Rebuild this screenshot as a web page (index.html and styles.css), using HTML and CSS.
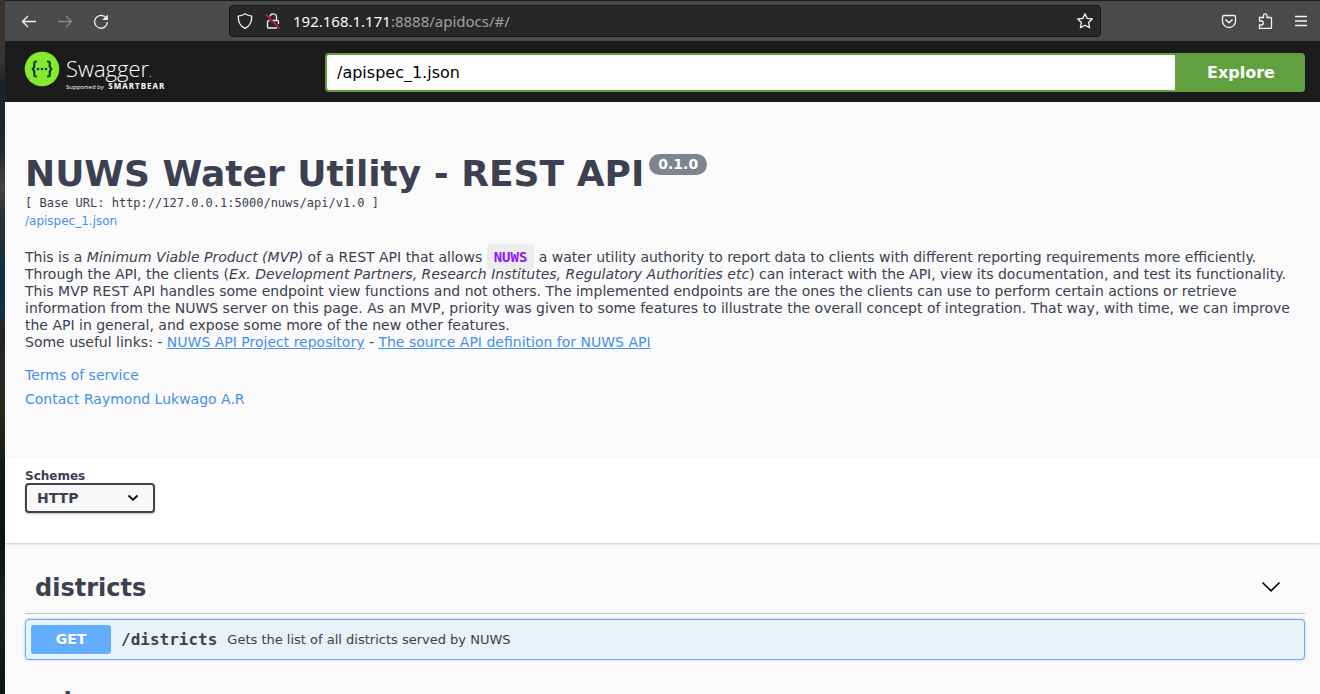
FILE: index.html
```html
<!DOCTYPE html>
<html lang="en">
<head>
<meta charset="utf-8">
<title>NUWS Water Utility - REST API</title>
<link rel="stylesheet" href="styles.css">
</head>
<body>
<div class="desktop">
  <div class="window">
    <div class="toolbar">
      <div class="nav">
        <button class="icon-button" aria-label="Back"><svg width="16" height="16" viewBox="0 0 16 16"><path d="M15 8.500H2M7 3L1.500 8.500L7 14"/></svg></button>
        <button class="icon-button icon-button-dim" aria-label="Forward"><svg width="16" height="16" viewBox="0 0 16 16"><path d="M1 8.500H14M9 3L14.500 8.500L9 14"/></svg></button>
        <button class="icon-button" aria-label="Reload"><svg width="16" height="16" viewBox="0 0 16 16"><path d="M13.500 5.500A6.400 6.400 0 1 0 14.400 9"/><path class="solid" d="M14.800 1.500V7H9.300Z"/></svg></button>
      </div>
      <div class="address">
        <svg class="chrome-icon" width="16" height="16" viewBox="0 0 16 16"><path d="M8 .8C10 2.200 12.500 2.900 14.700 3.200C14.900 8.500 13 13.200 8 15.300C3 13.200 1.100 8.500 1.300 3.200C3.500 2.900 6 2.200 8 .8Z"/></svg>
        <svg class="chrome-icon" width="16" height="16" viewBox="0 0 16 16"><path d="M5 3.500C5.500 -.2 11.500 -.2 11.500 4.500V7.500M7.500 7.500H12.200Q13.500 7.500 13.500 8.800V11M12 15H3.800Q2.500 15 2.500 13.700V8.800Q2.500 7.500 4.500 7.500"/><path class="slash" d="M1 1.500L14.800 15.500"/></svg>
        <span class="url"><span class="url-host">192.168.1.171</span>:8888/apidocs/#/</span>
        <button class="icon-button" aria-label="Bookmark"><svg width="16" height="16" viewBox="0 0 16 16"><path stroke-linejoin="round" d="M8 .8L10.200 5.400L15.300 6L11.600 9.500L12.600 14.800L8 12.200L3.400 14.800L4.400 9.500L.7 6L5.800 5.400Z"/></svg></button>
      </div>
      <div class="actions">
        <button class="icon-button" aria-label="Save to Pocket"><svg width="16" height="16" viewBox="0 0 16 16"><path d="M3 2.500H13Q14.500 2.500 14.500 4V8A6.500 6.500 0 0 1 1.500 8V4Q1.500 2.500 3 2.500Z"/><path stroke-width="1.500" d="M4.500 6.500L8 9.700L11.500 6.500"/></svg></button>
        <button class="icon-button" aria-label="Extensions"><svg width="16" height="16" viewBox="0 0 16 16"><path d="M2.500 15.400V12H4.300C6.900 12 6.900 8 4.300 8H2.500V4.500H6.500V2.500C6.500 .2 10 .2 10 2.500V4.500H13.500Q14.500 4.500 14.500 5.500V14.400Q14.500 15.400 13.500 15.400Z"/></svg></button>
        <button class="icon-button" aria-label="Menu"><svg width="16" height="16" viewBox="0 0 16 16"><path d="M2 3.500H14M2 8H14M2 12.500H14"/></svg></button>
      </div>
    </div>

    <header class="topbar">
      <a class="logo" href="#">
        <svg width="36" height="36" viewBox="0 0 36 36"><circle cx="18" cy="18" r="17.300" fill="#85ea2d"/><g fill="none" stroke="#173647" stroke-width="2.200"><path d="M13 10.500C9.500 10.300 10.300 12 10.300 14.500C10.300 17 9.800 17.600 8 18C9.800 18.400 10.300 19 10.300 21.500C10.300 24 9.500 25.700 13 25.500"/><path d="M23 10.500C26.500 10.300 25.700 12 25.700 14.500C25.700 17 26.200 17.600 28 18C26.200 18.400 25.700 19 25.700 21.500C25.700 24 26.500 25.700 23 25.500"/></g><g fill="#173647"><circle cx="14" cy="18" r="1.300"/><circle cx="18" cy="18" r="1.300"/><circle cx="22" cy="18" r="1.300"/></g></svg>
        <span class="logo-text"><span class="logo-name">Swagger<small>.</small></span><span class="logo-by">Supported by <b>SMARTBEAR</b></span></span>
      </a>
      <form class="explore">
        <input class="explore-input" type="text" value="/apispec_1.json" aria-label="API definition">
        <button class="explore-button" type="button">Explore</button>
      </form>
    </header>

    <main>
      <section class="info">
        <h1 class="title">NUWS Water Utility - REST API<span class="version">0.1.0</span></h1>
        <div class="base-url">[ Base URL: http://127.0.0.1:5000/nuws/api/v1.0 ]</div>
        <a class="spec-link" href="#">/apispec_1.json</a>
        <p class="description">This is a <em>Minimum Viable Product (MVP)</em> of a REST API that allows <code>NUWS</code> a water utility authority to report data to clients with different reporting requirements more efficiently. Through the API, the clients (<em>Ex. Development Partners, Research Institutes, Regulatory Authorities etc</em>) can interact with the API, view its documentation, and test its functionality. This MVP REST API handles some endpoint view functions and not others. The implemented endpoints are the ones the clients can use to perform certain actions or retrieve information from the NUWS server on this page. As an MVP, priority was given to some features to illustrate the overall concept of integration. That way, with time, we can improve the API in general, and expose some more of the new other features.<br>Some useful links: - <a href="#">NUWS API Project repository</a> - <a href="#">The source API definition for NUWS API</a></p>
        <a class="meta-link" href="#">Terms of service</a>
        <a class="meta-link" href="#">Contact Raymond Lukwago A.R</a>
      </section>

      <section class="schemes">
        <label class="schemes-label" for="scheme">Schemes</label>
        <div class="select">
          <select id="scheme"><option>HTTP</option></select>
          <svg class="select-arrow" width="12" height="8" viewBox="0 0 12 8"><path d="M1.500 1.500L6 5.800L10.500 1.500"/></svg>
        </div>
      </section>

      <section class="tag">
        <h2 class="tag-title">districts<button class="tag-toggle" aria-label="Collapse districts"><svg width="20" height="14" viewBox="0 0 20 14"><path d="M1.500 1.500L10 9.800L18.500 1.500"/></svg></button></h2>
        <a class="operation" href="#"><span class="method">GET</span><span class="path">/districts</span><span class="summary">Gets the list of all districts served by NUWS</span></a>
      </section>
      <section class="tag">
        <h2 class="tag-title">schemes</h2>
      </section>
    </main>
  </div>
</div>
</body>
</html>
```
FILE: styles.css
```css
* { box-sizing: border-box; }
body {
  margin: 0;
  font-family: "DejaVu Sans", sans-serif;
  color: #3b4151;
}
button { font: inherit; border: 0; margin: 0; cursor: pointer; }
a { color: #4990e2; }

.desktop {
  height: 100vh;
  overflow: hidden;
  padding-left: 5px;
  background: linear-gradient(#3a332d 0, #3a332d 60px, #142330 85px, #1c2935 150px, #47443b 185px, #26313b 220px, #0f2c45 290px, #10304a 310px, #25241f 330px, #232a22 390px, #252c12 410px, #101c16 470px, #0b1414 540px, #16241a 600px, #0c1611 100%);
}
.window { background: #fafafa; min-height: 100%; }

.toolbar {
  display: flex;
  align-items: center;
  height: 41px;
  padding: 0 11px 0 16px;
  border-top: 1px solid #1c1c1c;
  background: #4a4a4a;
}
.nav { display: flex; gap: 20px; width: 208px; }
.actions { display: flex; gap: 20px; margin-left: auto; }
.icon-button { display: flex; padding: 0; background: none; }
.icon-button svg, .chrome-icon {
  fill: none;
  stroke: #f4f4f4;
  stroke-width: 1.3;
}
.icon-button-dim svg { stroke: #888; }
.icon-button .solid { fill: #f4f4f4; stroke: none; }
.chrome-icon .slash { stroke: #e3134f; stroke-width: 1.5; }
.address {
  display: flex;
  align-items: center;
  gap: 12px;
  flex: 0 1 872px;
  height: 32px;
  padding: 0 7px;
  border: 1px solid #181818;
  border-radius: 4px;
  background: #272727;
}
.url {
  flex: 1;
  color: #a0a0a0;
  font: 15px/20px "Noto Sans", sans-serif;
}
.url-host { color: #fbfbfe; }

.topbar {
  display: flex;
  align-items: center;
  height: 61px;
  padding: 2px 15px 0 19px;
  background: #1b1b1b;
}
.logo {
  display: flex;
  gap: 6px;
  flex: 0 0 301px;
  height: 42px;
  margin-top: -2px;
  color: #fff;
  text-decoration: none;
}
.logo-text { display: flex; flex-direction: column; padding-top: 4px; font-family: "Open Sans", sans-serif; }
.logo-name { font-size: 22px; line-height: 26px; font-weight: 300; }
.logo-name small { font-size: 12px; line-height: 12px; }
.logo-by { font-size: 6px; line-height: 12px; white-space: nowrap; }
.logo-by b { margin-left: 3px; font-size: 8px; line-height: 8px; font-weight: 700; letter-spacing: 1px; }
.explore { display: flex; flex: 1; height: 39px; }
.explore-input {
  flex: 1;
  min-width: 0;
  padding: 0 10px;
  border: 2px solid #62a03f;
  border-right: 0;
  border-radius: 4px 0 0 4px;
  background: #fff;
  color: #000;
  font: 16px "DejaVu Sans", sans-serif;
}
.explore-button {
  width: 130px;
  padding: 0 0 0 2px;
  border-radius: 0 4px 4px 0;
  background: #62a03f;
  color: #fff;
  font-size: 16px;
  font-weight: 700;
}

.info { padding: 51px 20px 50px; }
.title { margin: 0; font-size: 36px; line-height: 42px; }
.version {
  display: inline-block;
  margin-left: 5px;
  padding: 2px 9px;
  border-radius: 11px;
  background: #7d8492;
  color: #fff;
  font-size: 14px;
  line-height: 17px;
  vertical-align: 17px;
}
.base-url { font: 12px/16px "DejaVu Sans Mono", monospace; }
.spec-link {
  display: block;
  font-size: 12px;
  line-height: 20px;
  text-decoration: none;
}
.description { margin: 18px 0 16px; font-size: 14px; line-height: 17px; }
.description code {
  padding: 5px 7px;
  border-radius: 4px;
  background: #ededed;
  color: #9012fe;
  font: 700 14px "DejaVu Sans Mono", monospace;
}
.meta-link {
  display: block;
  font-size: 14px;
  line-height: 17px;
  text-decoration: none;
}
.meta-link + .meta-link { margin-top: 7px; }

.schemes {
  padding: 11px 20px 30px;
  background: #fff;
  box-shadow: 0 1px 2px rgba(0, 0, 0, .2);
}
.schemes-label { display: block; font-size: 12px; line-height: 14px; font-weight: 700; }
.select { position: relative; width: 130px; }
.select select {
  display: block;
  appearance: none;
  width: 100%;
  height: 30px;
  padding: 0 10px;
  border: 2px solid #41444e;
  border-radius: 4px;
  background: #f7f7f7;
  box-shadow: 0 1px 2px rgba(0, 0, 0, .25);
  color: #3b4151;
  font: 700 14px "DejaVu Sans", sans-serif;
}
.select-arrow {
  position: absolute;
  right: 16px;
  top: 11px;
  fill: none;
  stroke: #000;
  stroke-width: 1.8;
  pointer-events: none;
}

.tag { padding: 0 15px 0 20px; }
.schemes + .tag { padding-top: 18px; }
.tag-title {
  display: flex;
  align-items: center;
  justify-content: space-between;
  margin: 0 0 5px;
  padding: 11px 24px 9px 10px;
  border-bottom: 1px solid #bfc1c5;
  font-size: 24px;
  line-height: 32px;
}
.tag-toggle { display: flex; padding: 0; background: none; }
.tag-toggle svg { fill: none; stroke: #000; stroke-width: 1.6; }
.operation {
  display: flex;
  align-items: center;
  margin-bottom: 15px;
  padding: 5px;
  border: 1px solid #61affe;
  border-radius: 4px;
  background: #e9f1f9;
  box-shadow: 0 0 3px rgba(0, 0, 0, .2);
  color: #3b4151;
  text-decoration: none;
}
.method {
  width: 80px;
  border-radius: 3px;
  background: #61affe;
  color: #fff;
  font-size: 14px;
  line-height: 29px;
  font-weight: 700;
  text-align: center;
  text-shadow: 0 1px 0 rgba(0, 0, 0, .1);
}
.path { padding: 0 10px; font: 700 16px "DejaVu Sans Mono", monospace; }
.summary { font-size: 13px; }
```
